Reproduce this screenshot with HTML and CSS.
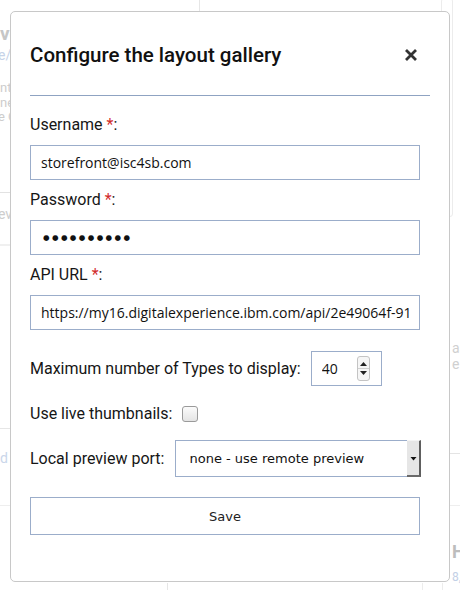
FILE: index.html
```html
<!DOCTYPE html>
<html lang="en">
<head>
<meta charset="utf-8">
<title>Configure the layout gallery</title>
<link rel="stylesheet" href="styles.css">
</head>
<body>
<div class="page" aria-hidden="true">
  <span class="bg bg-ve">ve</span>
  <span class="bg bg-link">e/.</span>
  <span class="bg bg-nt">nt</span>
  <span class="bg bg-ne">ne</span>
  <span class="bg bg-ec">e C</span>
  <span class="bg bg-line1"></span>
  <span class="bg bg-ev">ev</span>
  <span class="bg bg-line2"></span>
  <span class="bg bg-line3"></span>
  <span class="bg bg-d">d</span>
  <span class="bg bg-line4"></span>
  <span class="bg bg-vtop"></span>
  <span class="bg bg-card"></span>
  <span class="bg bg-as">as</span>
  <span class="bg bg-e">e</span>
  <span class="bg bg-line5"></span>
  <span class="bg bg-h">H</span>
  <span class="bg bg-8">8,</span>
  <span class="bg bg-vb1"></span>
  <span class="bg bg-vb2"></span>
  <span class="bg bg-vb3"></span>
</div>

<div class="modal" role="dialog" aria-labelledby="dlg-title">
  <div class="modal-header">
    <h2 class="title" id="dlg-title">Configure the layout gallery</h2>
    <button class="close" type="button" aria-label="Close">
      <svg width="14" height="14" viewBox="0 0 14 14"><path d="M2 2L12 12M12 2L2 12" stroke="#333" stroke-width="2.8" fill="none"/></svg>
    </button>
  </div>
  <div class="sep"></div>
  <form class="form">
    <label class="label" for="f-user">Username <span class="req">*</span>:</label>
    <input class="field" id="f-user" type="text" value="storefront@isc4sb.com">

    <label class="label" for="f-pass">Password <span class="req">*</span>:</label>
    <input class="field field-pass" id="f-pass" type="text" value="●●●●●●●●●●">

    <label class="label" for="f-url">API URL <span class="req">*</span>:</label>
    <input class="field" id="f-url" type="text" value="https://my16.digitalexperience.ibm.com/api/2e49064f-91e6-4c1b">

    <div class="row row-num">
      <label class="inline-label" for="f-num">Maximum number of Types to display:</label>
      <div class="num">
        <input class="num-input" id="f-num" type="text" value="40">
        <svg class="spin" width="13" height="25" viewBox="0 0 13 25">
          <rect x="0.5" y="0.5" width="12" height="24" rx="2.5" fill="#f6f6f6" stroke="#c4c4c4"/>
          <line x1="1" y1="12.5" x2="12" y2="12.5" stroke="#d0d0d0"/>
          <path d="M3 10L10 10L6.5 6Z" fill="#222"/>
          <path d="M3 15L10 15L6.5 19Z" fill="#222"/>
        </svg>
      </div>
    </div>

    <div class="row row-check">
      <label class="inline-label" for="f-live">Use live thumbnails:</label>
      <input class="check" id="f-live" type="checkbox">
    </div>

    <div class="row row-select">
      <label class="inline-label" for="f-port">Local preview port:</label>
      <div class="select">
        <select class="select-el" id="f-port"><option>none - use remote preview</option></select>
        <span class="select-btn">
          <svg width="7" height="5" viewBox="0 0 7 5"><path d="M0.5 1L6.5 1L3.5 4.5Z" fill="#111"/></svg>
        </span>
      </div>
    </div>

    <button class="save" type="button">Save</button>
  </form>
</div>
</body>
</html>
```

FILE: styles.css
```css
html, body {
  margin: 0;
  padding: 0;
}
body {
  width: 460px;
  height: 590px;
  overflow: hidden;
  background: #fff;
  position: relative;
  font-family: Roboto, "Liberation Sans", sans-serif;
  color: #161616;
}

/* faint page content behind the dialog */
.page {
  position: absolute;
  inset: 0;
}
.bg {
  position: absolute;
  display: block;
  white-space: nowrap;
  color: #cdcdcd;
  font-family: Roboto, sans-serif;
}
.bg-ve { left: 0; top: 22px; font-size: 19px; font-weight: 700; color: #c6c6c6; }
.bg-link { left: -2px; top: 47px; font-size: 14px; color: #c6d3e8; }
.bg-nt { left: 0; top: 80px; font-size: 13px; }
.bg-ne { left: 0; top: 95px; font-size: 13px; }
.bg-ec { left: -2px; top: 109px; font-size: 13px; }
.bg-line1 { left: 0; top: 192px; width: 12px; height: 1px; background: #e2e2e2; }
.bg-ev { left: -2px; top: 206px; font-size: 14px; }
.bg-line2 { left: 0; top: 244px; width: 12px; height: 2px; background: #f0f0f0; }
.bg-line3 { left: 0; top: 428px; width: 12px; height: 1px; background: #e6e6e6; }
.bg-d { left: 0; top: 450px; font-size: 14px; color: #cad6ea; }
.bg-line4 { left: 0; top: 505px; width: 460px; height: 1px; background: #eeeeee; }
.bg-vtop { left: 199px; top: 0; width: 1px; height: 12px; background: #e6e6e6; }
.bg-card { left: 441px; top: -2px; width: 10px; height: 217px; border: 1px solid #ececec; border-radius: 3px; }
.bg-as { left: 452px; top: 340px; font-size: 14px; color: #d0d0d0; }
.bg-e { left: 452px; top: 356px; font-size: 14px; color: #d0d0d0; }
.bg-line5 { left: 450px; top: 453px; width: 10px; height: 1px; background: #e4e4e4; }
.bg-h { left: 452px; top: 541px; font-size: 18px; font-weight: 700; color: #bdbdbd; }
.bg-8 { left: 452px; top: 570px; font-size: 12px; color: #c2d0e6; }
.bg-vb1 { left: 167px; top: 583px; width: 1px; height: 7px; background: #e6e6e6; }
.bg-vb2 { left: 422px; top: 583px; width: 1px; height: 7px; background: #ececec; }
.bg-vb3 { left: 442px; top: 583px; width: 1px; height: 7px; background: #ececec; }

/* dialog */
.modal {
  position: absolute;
  left: 10px;
  top: 11px;
  width: 440px;
  height: 571px;
  box-sizing: border-box;
  background: #fff;
  border: 1px solid #c8c8c8;
  border-radius: 5px;
  padding: 29px 19px 0 19px;
}
.modal-header {
  display: flex;
  align-items: center;
  justify-content: space-between;
  height: 28px;
}
.title {
  margin: 0;
  font-size: 20.5px;
  line-height: 28px;
  font-weight: 500;
  color: #111;
}
.close {
  display: flex;
  align-items: center;
  justify-content: center;
  width: 14px;
  height: 14px;
  padding: 0;
  margin-right: 12px;
  border: 0;
  background: transparent;
}
.close svg { display: block; }
.sep {
  height: 1px;
  background: #8fa3c2;
  margin: 26px 0 19px 0;
}

.form {
  display: flex;
  flex-direction: column;
  align-items: flex-start;
}
.label,
.inline-label {
  font-size: 16px;
  line-height: 20px;
  color: #161616;
}
.label { margin-bottom: 10px; }
.req { color: #d22c2c; }

.field {
  display: block;
  width: 390px;
  height: 35px;
  box-sizing: border-box;
  margin: 0 0 10px 0;
  padding: 0 10px;
  border: 1px solid #9badca;
  border-radius: 0;
  background: #fff;
  font-family: "Open Sans", sans-serif;
  font-size: 14px;
  color: #111;
  outline: none;
}
.field-pass {
  padding-left: 12px;
  font-family: "DejaVu Sans", sans-serif;
  font-size: 7.5px;
  letter-spacing: 2.4px;
}

.row {
  display: flex;
  align-items: center;
}
.row-num { margin-top: 11px; }
.row-check { margin-top: 18px; }
.row-select { margin-top: 16px; }

.num {
  display: flex;
  align-items: center;
  width: 71px;
  height: 35px;
  box-sizing: border-box;
  margin-left: 10px;
  padding: 0 11px 0 0;
  border: 1px solid #9badca;
  background: #fff;
}
.num-input {
  flex: 1;
  min-width: 0;
  height: 100%;
  box-sizing: border-box;
  padding: 0 0 0 10px;
  border: 0;
  outline: none;
  background: transparent;
  font-family: "Open Sans", sans-serif;
  font-size: 14px;
  color: #111;
}
.spin { display: block; flex: none; }

.check {
  appearance: none;
  -webkit-appearance: none;
  width: 16px;
  height: 16px;
  box-sizing: border-box;
  margin: 0 0 0 10px;
  border: 1px solid #9a9a9a;
  border-radius: 3px;
  background: linear-gradient(#fbfbfb, #e4e4e4);
}

.select {
  display: flex;
  width: 246px;
  height: 37px;
  box-sizing: border-box;
  margin-left: 11px;
  border: 1px solid #9badca;
  border-right: 0;
  background: #fff;
}
.select-el {
  flex: 1;
  min-width: 0;
  appearance: none;
  -webkit-appearance: none;
  border: 0;
  outline: none;
  background: transparent;
  padding: 0 0 0 13px;
  font-family: "DejaVu Sans", sans-serif;
  font-size: 13px;
  color: #111;
}
.select-btn {
  display: flex;
  align-items: center;
  justify-content: center;
  width: 14px;
  box-sizing: border-box;
  margin-top: -1px;
  margin-bottom: -1px;
  background: #e6e6e6;
  border-right: 2px solid #5e5e5e;
  border-bottom: 2px solid #6a6a6a;
  border-top: 1px solid #f4f4f4;
}
.select-btn svg { display: block; }

.save {
  width: 390px;
  height: 38px;
  box-sizing: border-box;
  margin-top: 20px;
  padding: 0;
  border: 1px solid #9badca;
  background: #fff;
  font-family: "DejaVu Sans", sans-serif;
  font-size: 13px;
  color: #222;
}
```
